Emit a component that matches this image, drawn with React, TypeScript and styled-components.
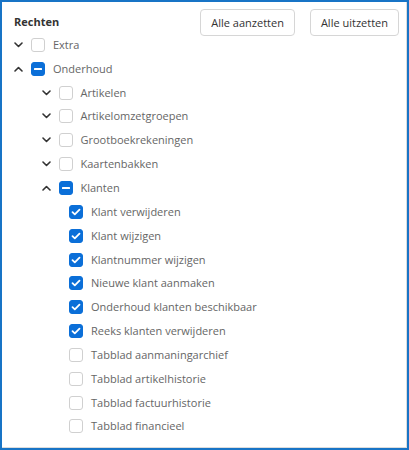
import React from "react";
import styled, { createGlobalStyle } from "styled-components";

const GlobalStyle = createGlobalStyle`
  html, body {
    margin: 0;
    padding: 0;
    background: #ffffff;
  }
  * {
    box-sizing: border-box;
  }
`;

type CheckState = "on" | "off" | "mixed";

type Node = {
  label: string;
  level: number;
  state: CheckState;
  expand?: "open" | "closed";
};

const nodes: Node[] = [
  { label: "Extra", level: 0, state: "off", expand: "closed" },
  { label: "Onderhoud", level: 0, state: "mixed", expand: "open" },
  { label: "Artikelen", level: 1, state: "off", expand: "closed" },
  { label: "Artikelomzetgroepen", level: 1, state: "off", expand: "closed" },
  { label: "Grootboekrekeningen", level: 1, state: "off", expand: "closed" },
  { label: "Kaartenbakken", level: 1, state: "off", expand: "closed" },
  { label: "Klanten", level: 1, state: "mixed", expand: "open" },
  { label: "Klant verwijderen", level: 2, state: "on" },
  { label: "Klant wijzigen", level: 2, state: "on" },
  { label: "Klantnummer wijzigen", level: 2, state: "on" },
  { label: "Nieuwe klant aanmaken", level: 2, state: "on" },
  { label: "Onderhoud klanten beschikbaar", level: 2, state: "on" },
  { label: "Reeks klanten verwijderen", level: 2, state: "on" },
  { label: "Tabblad aanmaningarchief", level: 2, state: "off" },
  { label: "Tabblad artikelhistorie", level: 2, state: "off" },
  { label: "Tabblad factuurhistorie", level: 2, state: "off" },
  { label: "Tabblad financieel", level: 2, state: "off" },
];

const Panel = styled.div`
  width: 409px;
  height: 450px;
  border: 2px solid #1874c6;
  box-shadow: inset -1px -1px 0 #dcdcdc;
  padding: 7px 8px 0 12px;
  font-family: "Open Sans", "Noto Sans", sans-serif;
  background: #fff;
`;

const Header = styled.div`
  display: flex;
  align-items: flex-start;
  justify-content: space-between;
  height: 24px;
`;

const Title = styled.div`
  margin-top: 5px;
  font-size: 11px;
  line-height: 16px;
  font-weight: 700;
  color: #333;
`;

const Actions = styled.div`
  display: flex;
  gap: 15px;
`;

const Button = styled.button`
  height: 27px;
  padding: 0 10px;
  background: #fff;
  border: 1px solid #d6d6d6;
  border-radius: 4px;
  font-family: inherit;
  font-size: 11px;
  color: #333;
  cursor: pointer;
`;

const Tree = styled.ul`
  list-style: none;
  margin: 0;
  padding: 0;
`;

const Row = styled.li<{ $level: number }>`
  display: flex;
  align-items: center;
  height: 23.85px;
  padding-left: ${(p) => p.$level * 27.5}px;
  font-size: 11px;
  color: #666;
`;

const Toggle = styled.span`
  display: inline-flex;
  width: 9px;
  margin-right: 8px;
  justify-content: center;
  color: #333;
`;

const Box = styled.span<{ $state: CheckState }>`
  display: inline-flex;
  align-items: center;
  justify-content: center;
  width: 14px;
  height: 14px;
  border-radius: 3px;
  border: 1px solid ${(p) => (p.$state === "off" ? "#d0d0d0" : "#0b6fd8")};
  background: ${(p) => (p.$state === "off" ? "#fff" : "#0b6fd8")};
  margin-right: 8px;
  flex-shrink: 0;
`;

const Label = styled.span`
  line-height: 16px;
  white-space: nowrap;
`;

const Chevron = ({ open }: { open: boolean }) => (
  <svg width="9" height="6" viewBox="0 0 9 6" fill="none">
    <path
      d={open ? "M1 5L4.5 1.5L8 5" : "M1 1L4.5 4.5L8 1"}
      stroke="currentColor"
      strokeWidth="1.6"
      strokeLinecap="round"
      strokeLinejoin="round"
    />
  </svg>
);

const Mark = ({ state }: { state: CheckState }) => {
  if (state === "on")
    return (
      <svg width="10" height="8" viewBox="0 0 10 8" fill="none">
        <path
          d="M1.5 4.2L3.8 6.4L8.5 1.6"
          stroke="#fff"
          strokeWidth="1.8"
          strokeLinecap="round"
          strokeLinejoin="round"
        />
      </svg>
    );
  if (state === "mixed")
    return (
      <svg width="8" height="2" viewBox="0 0 8 2">
        <rect x="0" y="0" width="8" height="2" rx="0.5" fill="#fff" />
      </svg>
    );
  return null;
};

export default function App() {
  return (
    <>
      <GlobalStyle />
      <Panel>
        <Header>
          <Title>Rechten</Title>
          <Actions>
            <Button>Alle aanzetten</Button>
            <Button>Alle uitzetten</Button>
          </Actions>
        </Header>
        <Tree>
          {nodes.map((n) => (
            <Row key={n.label} $level={n.level}>
              {n.expand && (
                <Toggle>
                  <Chevron open={n.expand === "open"} />
                </Toggle>
              )}
              <Box $state={n.state}>
                <Mark state={n.state} />
              </Box>
              <Label>{n.label}</Label>
            </Row>
          ))}
        </Tree>
      </Panel>
    </>
  );
}
